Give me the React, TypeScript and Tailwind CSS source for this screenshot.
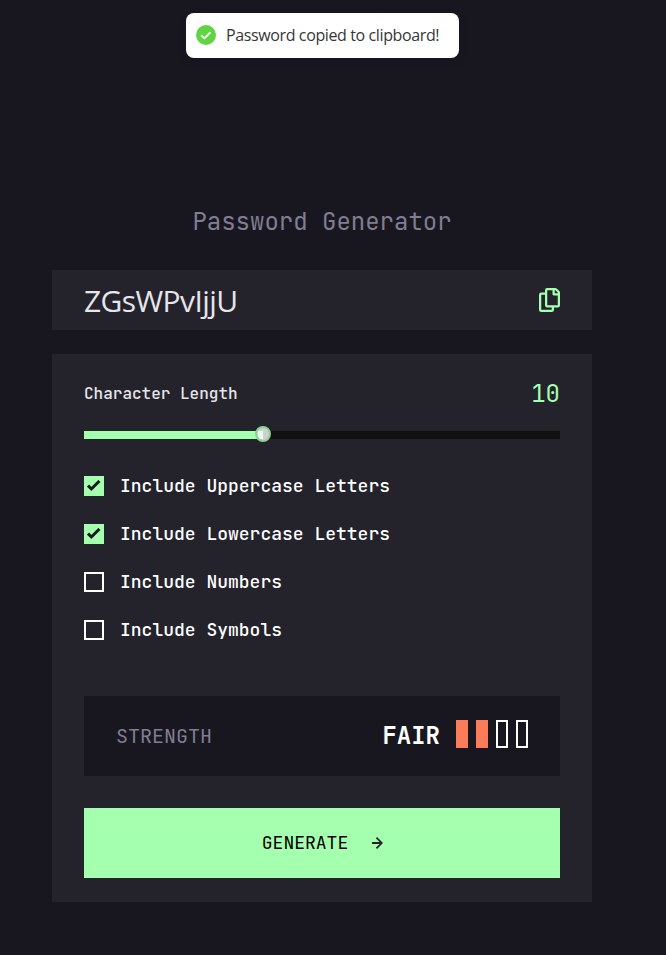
import React, { useState } from "react";

function Toast({ message }: { message: string }) {
  return (
    <div className="absolute left-[186px] top-[13px] flex h-[45px] w-[273px] items-center gap-[10px] whitespace-nowrap rounded-lg bg-white pb-0.5 pl-[10px] font-['Open_Sans','Noto_Sans',sans-serif] text-base tracking-[-0.38px] text-[#363636] shadow-[0_3px_10px_rgba(0,0,0,0.1)]">
      <svg width="20" height="20" viewBox="0 0 20 20" className="shrink-0">
        <circle cx="10" cy="10" r="10" fill="#61d345" />
        <path d="m5.2 10.2 3.3 3 6-6" fill="none" stroke="#e9fbe5" strokeWidth="2" />
      </svg>
      <span>{message}</span>
    </div>
  );
}

function CopyIcon() {
  return (
    <svg width="21" height="24" viewBox="0 0 21 24" fill="#a4ffaf">
      <path d="M20.341 3.091 17.909.659A2.25 2.25 0 0 0 16.319 0H8.25A2.25 2.25 0 0 0 6 2.25V4.5H2.25A2.25 2.25 0 0 0 0 6.75v15A2.25 2.25 0 0 0 2.25 24h10.5A2.25 2.25 0 0 0 15 21.75V19.5h3.75A2.25 2.25 0 0 0 21 17.25V4.682a2.25 2.25 0 0 0-.659-1.591ZM12.469 21.75H2.53a.281.281 0 0 1-.281-.281V7.03a.281.281 0 0 1 .281-.281H6v10.5a2.25 2.25 0 0 0 2.25 2.25h4.5v1.969a.282.282 0 0 1-.281.281Zm6-4.5H8.53a.281.281 0 0 1-.281-.281V2.53a.281.281 0 0 1 .281-.281H13.5v4.125c0 .621.504 1.125 1.125 1.125h4.125v9.469a.282.282 0 0 1-.281.281Zm.281-12h-3v-3h.451c.075 0 .147.03.2.082L18.667 4.6a.283.283 0 0 1 .082.199v.451Z" />
    </svg>
  );
}

function Option({ label, initial }: { label: string; initial: boolean }) {
  const [checked, setChecked] = useState(initial);
  return (
    <button
      type="button"
      role="checkbox"
      aria-checked={checked}
      onClick={() => setChecked(!checked)}
      className="flex h-6 items-center gap-4 text-left text-[18px] font-medium text-white"
    >
      {checked ? (
        <span className="flex size-5 items-center justify-center bg-[#a4ffaf]">
          <svg width="14" height="12" viewBox="0 0 14 12">
            <path d="M1 5.607 4.393 9l8-8" fill="none" stroke="#18171f" strokeWidth="3" />
          </svg>
        </span>
      ) : (
        <span className="size-5 border-2 border-white" />
      )}
      <span className="pb-0.5">{label}</span>
    </button>
  );
}

const options = [
  { label: "Include Uppercase Letters", initial: true },
  { label: "Include Lowercase Letters", initial: true },
  { label: "Include Numbers", initial: false },
  { label: "Include Symbols", initial: false },
];

export default function App() {
  return (
    <div className="relative h-[955px] w-full overflow-hidden bg-[#18171f] pl-[52px] pt-[206px] font-['JetBrains_Mono','DejaVu_Sans_Mono',monospace]">
      <Toast message="Password copied to clipboard!" />
      <main className="flex w-[540px] flex-col">
        <h1 className="h-8 text-center text-2xl text-[#817d92]">Password Generator</h1>

        <section className="mt-8 flex h-[60px] items-center justify-between bg-[#24232c] px-8">
          <span className="pt-0.5 font-['Open_Sans','Noto_Sans',sans-serif] text-[30px] leading-10 tracking-[-0.6px] text-[#e6e5ea]">
            ZGsWPvIjjU
          </span>
          <button type="button" aria-label="Copy password">
            <CopyIcon />
          </button>
        </section>

        <section className="mt-6 flex h-[548px] flex-col bg-[#24232c] px-8 pt-6">
          <div className="flex h-8 items-center justify-between">
            <span className="text-base font-medium text-[#e6e5ea]">Character Length</span>
            <span className="text-2xl text-[#a4ffaf]">10</span>
          </div>

          <div className="mt-4 flex h-4 items-center">
            <div className="mt-0.5 h-2 w-[171px] bg-[#a4ffaf]" />
            <div className="relative -mx-px flex h-4 w-[18px] items-center justify-center">
              <div className="absolute left-0 top-[5px] h-2 w-[9px] bg-[#a4ffaf]" />
              <div className="absolute left-[9px] top-[5px] h-2 w-[9px] bg-[#111111]" />
              <svg width="16" height="16" viewBox="0 0 16 16" className="relative">
                <circle cx="8" cy="8" r="7" fill="#d0d0d2" />
                <path d="M3 5h5v8H5L3 11Z" fill="#ebfded" />
                <circle cx="8" cy="8" r="7" fill="none" stroke="#8ad395" strokeWidth="2" />
              </svg>
            </div>
            <div className="mt-0.5 h-2 flex-1 bg-[#111111]" />
          </div>

          <div className="mt-8 flex flex-col gap-6">
            {options.map((option) => (
              <Option key={option.label} {...option} />
            ))}
          </div>

          <div className="mt-[54px] flex h-20 items-center justify-between bg-[#18171f] px-8">
            <span className="text-xl text-[#817d92]">STRENGTH</span>
            <div className="flex items-center gap-4">
              <span className="text-2xl font-bold text-white">FAIR</span>
              <div className="flex gap-2 pb-1">
                <span className="h-7 w-3 bg-[#fb7c58]" />
                <span className="h-7 w-3 bg-[#fb7c58]" />
                <span className="h-7 w-3 border-2 border-white" />
                <span className="h-7 w-3 border-2 border-white" />
              </div>
            </div>
          </div>

          <button
            type="button"
            className="mt-8 flex h-[70px] items-center justify-center gap-6 bg-[#a4ffaf] pl-px text-[18px] text-black"
          >
            <span className="pb-0.5">GENERATE</span>
            <svg width="11" height="12" viewBox="0 0 11.106 12" fill="#24232c">
              <path d="m5.106 12 6-6-6-6-1.265 1.265 3.841 3.84H.001v1.79h7.681l-3.841 3.84z" />
            </svg>
          </button>
        </section>
      </main>
    </div>
  );
}
